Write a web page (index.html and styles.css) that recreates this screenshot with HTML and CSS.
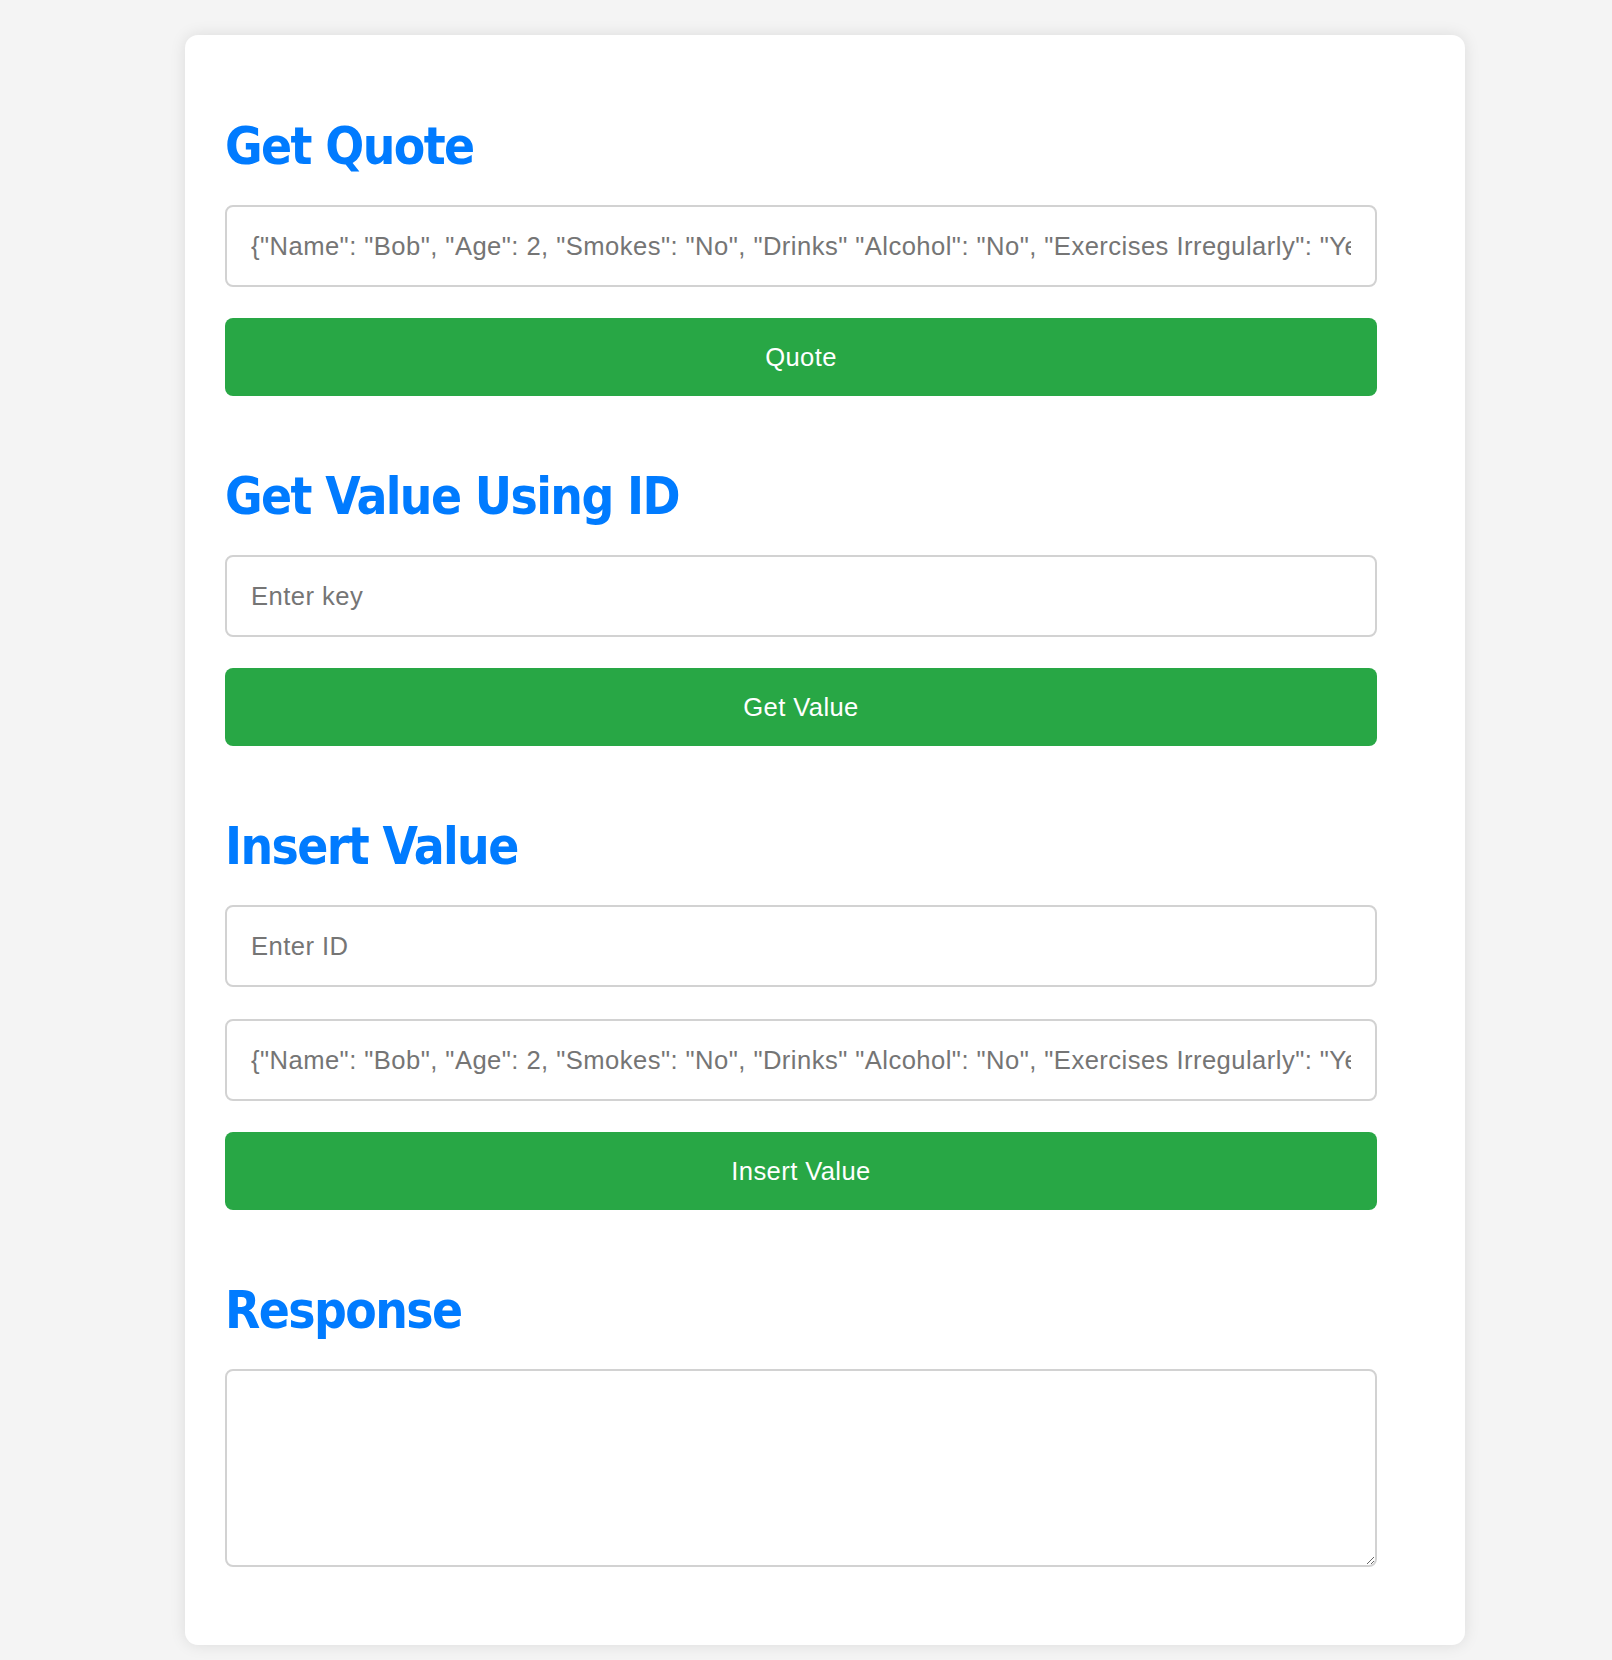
FILE: index.html
```html
<!DOCTYPE html>
<html lang="en">
<head>
<meta charset="utf-8">
<title>Quote Service</title>
<link rel="stylesheet" href="styles.css">
</head>
<body>
<div class="card">
  <h2 class="title first">Get Quote</h2>
  <input class="field" type="text" placeholder='{"Name": "Bob", "Age": 2, "Smokes": "No", "Drinks" "Alcohol": "No", "Exercises Irregularly": "Yes", "Eats Unhealthy": "No"}'>
  <button class="btn">Quote</button>

  <h2 class="title">Get Value Using ID</h2>
  <input class="field" type="text" placeholder="Enter key">
  <button class="btn">Get Value</button>

  <h2 class="title">Insert Value</h2>
  <input class="field" type="text" placeholder="Enter ID">
  <input class="field field-next" type="text" placeholder='{"Name": "Bob", "Age": 2, "Smokes": "No", "Drinks" "Alcohol": "No", "Exercises Irregularly": "Yes", "Eats Unhealthy": "No"}'>
  <button class="btn">Insert Value</button>

  <h2 class="title">Response</h2>
  <textarea class="response"></textarea>
</div>
</body>
</html>
```

FILE: styles.css
```css
html, body {
  margin: 0;
  padding: 0;
}

body {
  background: #f4f4f4;
  font-family: "Liberation Sans", Arial, sans-serif;
  padding-top: 35px;
  padding-bottom: 17px;
}

.card {
  box-sizing: border-box;
  width: 1280px;
  margin: 0 0 0 185px;
  padding: 40px;
  background: #ffffff;
  border-radius: 13px;
  box-shadow: 0 0 16px rgba(0, 0, 0, 0.1);
}

.title {
  margin: 71px 0 28px;
  color: #007bff;
  font-family: "DejaVu Sans Condensed", "DejaVu Sans", sans-serif;
  font-weight: bold;
  font-size: 51px;
  line-height: 60px;
  letter-spacing: -1.6px;
}

.title.first {
  margin-top: 42px;
}

.field {
  display: block;
  box-sizing: border-box;
  width: 1152px;
  height: 82px;
  margin: 0 0 31px;
  padding: 0 24px;
  border: 2px solid #d2d2d2;
  border-radius: 8px;
  font-family: "Liberation Sans", Arial, sans-serif;
  font-size: 25.6px;
  letter-spacing: 0.45px;
  color: #333333;
  background: #ffffff;
  outline: none;
}

.field::placeholder {
  color: #757575;
  opacity: 1;
}

.field.field-next {
  margin-top: 32px;
}

.btn {
  display: block;
  box-sizing: border-box;
  width: 1152px;
  height: 78px;
  margin: 0;
  padding: 0;
  border: none;
  border-radius: 8px;
  background: #28a745;
  color: #ffffff;
  font-family: "Liberation Sans", Arial, sans-serif;
  font-size: 25.6px;
  letter-spacing: 0.4px;
  cursor: pointer;
}

.response {
  display: block;
  box-sizing: border-box;
  width: 1152px;
  height: 198px;
  margin: 0 0 38px;
  padding: 24px;
  border: 2px solid #d2d2d2;
  border-radius: 8px;
  font-family: "Liberation Sans", Arial, sans-serif;
  font-size: 25.6px;
  background: #ffffff;
  outline: none;
}
```
